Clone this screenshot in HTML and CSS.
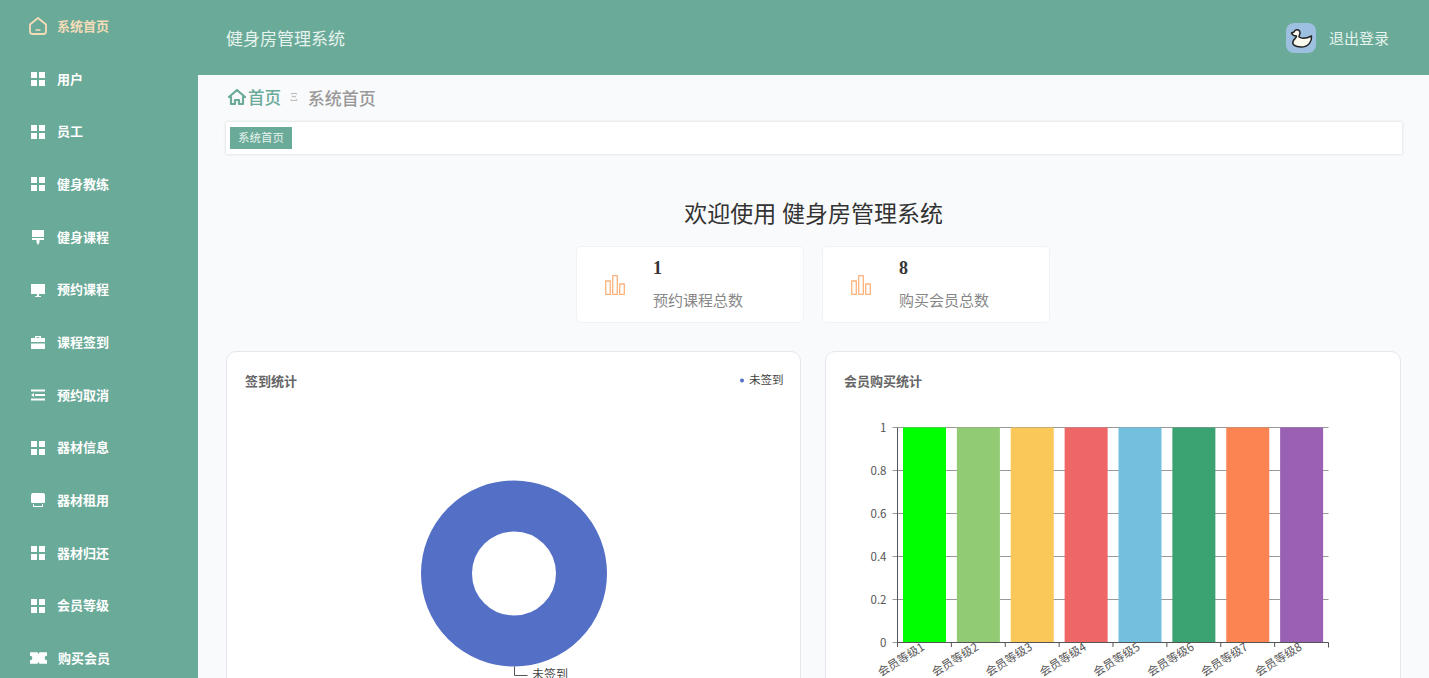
FILE: index.html
```html
<!doctype html>
<html lang="zh">
	<head>
		<meta charset="utf-8"/>
		<title>健身房管理系统</title>
		<link rel="stylesheet" href="styles.css">
	</head>

	<body>
		<svg class="defs" width="0" height="0">
			<symbol id="icoGrid" viewBox="0 0 16 16">
				<path d="M1 1h6v6H1zM9 1h6v6H9zM1 9h6v6H1zM9 9h6v6H9z" fill="#fff"/>
			</symbol>
			<symbol id="icoBars" viewBox="0 0 20 20">
				<path d="M.7 6h4.600v13.300H.7zM7.700 .7h4.600v18.600H7.700zM14.700 9h4.600v10.300h-4.600z" fill="none" stroke="#fdb27c" stroke-width="1.300" stroke-linejoin="round"/>
			</symbol>
		</svg>

		<nav class="sidebar">
			<a class="navItem active">
				<svg viewBox="0 0 18 18"><path d="M1 7.500 9 1l8 6.500V14.500a2.500 2.500 0 0 1-2.500 2.500h-11A2.500 2.500 0 0 1 1 14.500z" fill="none" stroke="#f4dcb8" stroke-width="1.800" stroke-linejoin="round"/><path d="M6.500 13h5" stroke="#f4dcb8" stroke-width="1.500"/></svg>
				<span>系统首页</span>
			</a>
			<a class="navItem"><svg viewBox="0 0 16 16"><use href="#icoGrid"/></svg><span>用户</span></a>
			<a class="navItem"><svg viewBox="0 0 16 16"><use href="#icoGrid"/></svg><span>员工</span></a>
			<a class="navItem"><svg viewBox="0 0 16 16"><use href="#icoGrid"/></svg><span>健身教练</span></a>
			<a class="navItem">
				<svg viewBox="0 0 16 16"><path d="M2 1h12v7H2zM2 9h12v2H9.500v2.500L8 16l-1.500-2.500V11H2z" fill="#fff"/></svg>
				<span>健身课程</span>
			</a>
			<a class="navItem">
				<svg viewBox="0 0 16 16"><path d="M1 2h14v10H1zM5 14h6v1H5z" fill="#fff"/><path d="M7 12h2v2H7z" fill="#fff"/></svg>
				<span>预约课程</span>
			</a>
			<a class="navItem">
				<svg viewBox="0 0 16 16"><path d="M5 4V2h6v2h4v4H1V4zM6.500 3.300V4h3v-.7zM1 9.500h14V15H1z" fill="#fff" fill-rule="evenodd"/></svg>
				<span>课程签到</span>
			</a>
			<a class="navItem">
				<svg viewBox="0 0 16 16"><path d="M1 2.500h14v2H1zM5 7h10v2H5zM1 8l3-2v4zM1 11.500h14v2H1z" fill="#fff"/></svg>
				<span>预约取消</span>
			</a>
			<a class="navItem"><svg viewBox="0 0 16 16"><use href="#icoGrid"/></svg><span>器材信息</span></a>
			<a class="navItem">
				<svg viewBox="0 0 16 16"><path d="M3 1h10a2 2 0 0 1 2 2v7a1 1 0 0 1-1 1H2a1 1 0 0 1-1-1V3a2 2 0 0 1 2-2zM3 12h1v2h8v-2h1v3H3z" fill="#fff"/></svg>
				<span>器材租用</span>
			</a>
			<a class="navItem"><svg viewBox="0 0 16 16"><use href="#icoGrid"/></svg><span>器材归还</span></a>
			<a class="navItem"><svg viewBox="0 0 16 16"><use href="#icoGrid"/></svg><span>会员等级</span></a>
			<a class="navItem">
				<svg class="wide" viewBox="0 0 18 14"><path d="M0 1h8l1 2 1-2h8v3.500a2.500 2.500 0 0 0 0 5V13h-8l-1-2-1 2H0V9.500a2.500 2.500 0 0 0 0-5z" fill="#fff"/></svg>
				<span>购买会员</span>
			</a>
		</nav>

		<div class="content">
			<header class="topbar">
				<div class="sysName">健身房管理系统</div>
				<div class="avatar">
					<svg viewBox="0 0 30 30">
						<path d="M5.500 10 8 9C9 6 13.500 6 14 9.500c.2 2-1.200 3-1 4.500 3 2 7.500 1.500 12.500-1 .5 5-2.500 11-10.500 11-6 0-9-2.500-8-5.500 1-3 3.500-3 3.500-5.500-2 0-4-.5-5-3z" fill="#fdfaf0" stroke="#222" stroke-width="1.500" stroke-linejoin="round"/>
					</svg>
				</div>
				<a class="logout">退出登录</a>
			</header>

			<div class="crumbs">
				<svg viewBox="0 0 18 18"><path d="M1 9 9 2l8 7h-2v7h-4v-4H7v4H3V9z" fill="none" stroke="#6aaa98" stroke-width="2.200" stroke-linejoin="round"/></svg>
				<span class="crumbHome">首页</span>
				<span class="crumbSep">Ξ</span>
				<span class="crumbPage">系统首页</span>
			</div>

			<div class="tabBar"><span class="tag">系统首页</span></div>

			<h1 class="welcome">欢迎使用 健身房管理系统</h1>

			<section class="stats">
				<div class="statCard">
					<svg viewBox="0 0 20 20"><use href="#icoBars"/></svg>
					<div>
						<div class="statNum">1</div>
						<div class="statLabel">预约课程总数</div>
					</div>
				</div>
				<div class="statCard">
					<svg viewBox="0 0 20 20"><use href="#icoBars"/></svg>
					<div>
						<div class="statNum">8</div>
						<div class="statLabel">购买会员总数</div>
					</div>
				</div>
			</section>

			<section class="charts">
				<div class="chartCard">
					<svg class="chart" viewBox="0 0 573 400">
						<text class="chartTitle" x="18" y="34">签到统计</text>
						<circle cx="515" cy="28.500" r="2" fill="#5470c6"/>
						<text class="chartText" x="522" y="32">未签到</text>
						<circle cx="287" cy="221.500" r="67.500" fill="none" stroke="#5470c6" stroke-width="51"/>
						<path d="M287.500 314.500v9h13" fill="none" stroke="#555" stroke-width="1"/>
						<text class="chartLabel" x="305" y="327">未签到</text>
					</svg>
				</div>
				<div class="chartCard">
					<svg class="chart" viewBox="0 0 574 400" id="barChart"></svg>
				</div>
			</section>
		</div>

		<script src="chart.js"></script>
	</body>
</html>
```

FILE: styles.css
```css
html, body {
	overflow: hidden;
	width: 100%;
	height: 100%;
}
body {
	display: flex;
	margin: 0;
	background-color: #f9fafc;
	font-family: "Liberation Serif", "Noto Sans CJK SC", serif;
}
.defs {
	position: absolute;
}

.sidebar {
	flex: 0 0 198px;
	height: 100%;
	background-color: #6aaa98;
}
.navItem {
	display: flex;
	align-items: center;
	height: 52.67px;
	padding-left: 30px;
	color: #fff;
	font-size: 13px;
	font-weight: bold;
}
.navItem span {
	margin-bottom: 1.500px;
}
.navItem svg {
	width: 16px;
	height: 16px;
	margin-right: 11px;
}
.navItem svg.wide {
	width: 17px;
}
.navItem.active {
	color: #f4dcb8;
}
.navItem.active svg {
	width: 18px;
	height: 18px;
	margin-left: -1px;
	margin-right: 10px;
}

.content {
	flex: 1;
	min-width: 0;
}
.topbar {
	display: flex;
	align-items: center;
	height: 75px;
	padding: 0 40px 0 28px;
	background-color: #6aaa98;
	color: #e6f3ee;
}
.sysName {
	flex: 1;
	margin-bottom: 2px;
	padding-top: 1px;
	font-size: 17px;
}
.avatar {
	width: 30px;
	height: 30px;
	margin-right: 13px;
	border-radius: 8px;
	background-color: #9dc0e0;
}
.avatar svg {
	display: block;
}
.logout {
	margin-bottom: 2px;
	padding-top: 1px;
	font-size: 15px;
}

.crumbs {
	display: flex;
	align-items: center;
	box-sizing: border-box;
	height: 47px;
	padding: 0 0 3px 30px;
}
.crumbs svg {
	width: 18px;
	height: 18px;
	margin-right: 2px;
}
.crumbHome {
	color: #6aaa98;
	font-size: 16.500px;
	font-weight: 500;
}
.crumbSep {
	margin: 0 10px 0 9px;
	color: #bbb;
	font-size: 12px;
}
.crumbPage {
	color: #999;
	font-size: 17px;
	font-weight: 500;
}

.tabBar {
	display: flex;
	align-items: center;
	height: 32px;
	margin: 0 27px 0 28px;
	padding-left: 4px;
	background-color: #fff;
	box-shadow: 0 0 3px rgba(0, 0, 0, .15);
}
.tag {
	padding: 0 8px;
	background-color: #6aaa98;
	color: #e6f3ee;
	font-size: 11.500px;
	line-height: 22px;
}

.welcome {
	margin: 46px 0 16px;
	color: #333;
	font-size: 23px;
	font-weight: normal;
	line-height: 30px;
	text-align: center;
}

.stats {
	display: flex;
	justify-content: center;
	gap: 18px;
	padding-right: 1px;
}
.statCard {
	display: flex;
	align-items: center;
	box-sizing: border-box;
	width: 228px;
	height: 77px;
	padding-left: 28px;
	background-color: #fff;
	border: 1px solid #f1f2f4;
	border-radius: 5px;
}
.statCard svg {
	flex: none;
	width: 20px;
	height: 20px;
	margin-right: 28px;
}
.statNum {
	margin-bottom: 13px;
	color: #333;
	font-size: 18px;
	font-weight: bold;
	line-height: 20px;
}
.statLabel {
	color: #888;
	font-size: 15px;
	line-height: 20px;
}

.charts {
	display: grid;
	grid-template-columns: 575px 576px;
	gap: 24px;
	margin: 28px 0 0 28px;
}
.chartCard {
	background-color: #fff;
	border: 1px solid #e4e7ed;
	border-radius: 10px;
}
.chart {
	display: block;
	width: 100%;
	height: 400px;
}
.chart text {
	font-family: "Noto Sans CJK SC", sans-serif;
}
.chart .chartTitle {
	fill: #666;
	font-size: 13px;
	font-weight: bold;
}
.chart .chartText {
	fill: #444;
	font-size: 11.500px;
}
.chart .chartLabel {
	fill: #444;
	font-size: 12px;
}
.chart .axisText {
	fill: #555;
	font-size: 11.500px;
}
```

FILE: chart.js
```js
"use strict";

window.onload = function() {
	var objChart = document.getElementById("barChart");
	var arrColors = ["#00ff00", "#91cb74", "#fac858", "#ee6666", "#73c0de", "#3ba272", "#fc8452", "#9a60b4"];
	var arrTicks = ["0", "0.2", "0.4", "0.6", "0.8", "1"];
	var numLeft = 71.5, numBottom = 290.5, numStep = 53.875, numHigh = 43;
	var strSvg = '<text class="chartTitle" x="18" y="34">会员购买统计</text>';
	var numI = 0;

	// Value axis and grid lines
	for (numI=0; numI<arrTicks.length; numI++) {
		var numY = numBottom - numI * numHigh;
		strSvg += '<path d="M' + (numLeft - 5) + ' ' + numY + 'H' + (numLeft + numStep * 8) + '" stroke="#999" stroke-width="1"/>';
		strSvg += '<text class="axisText" text-anchor="end" x="' + (numLeft - 11) + '" y="' + (numY + 4) + '">' + arrTicks[numI] + '</text>';
	}

	// One bar per level
	for (numI=0; numI<8; numI++) {
		var numX = numLeft + numStep * numI + 5.5;
		strSvg += '<rect x="' + numX + '" y="75.5" width="43" height="215" fill="' + arrColors[numI] + '"/>';
		var numT = numLeft + numStep * numI;
		strSvg += '<path d="M' + numT + ' 290v5" stroke="#555"/>';
		strSvg += '<text class="axisText" text-anchor="end" transform="translate(' + (numT + 28) + ' 297) rotate(-32)">会员等级' + (numI + 1) + '</text>';
	}

	strSvg += '<path d="M' + numLeft + ' 75.5V290.5H' + (numLeft + numStep * 8) + 'v5" fill="none" stroke="#555"/>';
	objChart.innerHTML = strSvg;
};
```
